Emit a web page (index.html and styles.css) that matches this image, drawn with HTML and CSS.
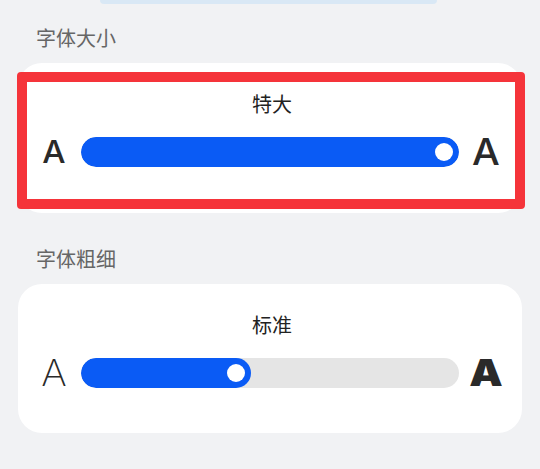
FILE: index.html
```html
<!DOCTYPE html>
<html lang="zh">
<head>
<meta charset="utf-8">
<link rel="stylesheet" href="styles.css">
</head>
<body>
<div class="topbar"></div>

<div class="section-label">字体大小</div>
<div class="card card-size">
  <div class="card-title">特大</div>
  <div class="slider-row">
    <span class="glyph glyph-small">A</span>
    <div class="track"><div class="fill" style="width:100%"><span class="knob"></span></div></div>
    <span class="glyph glyph-large">A</span>
  </div>
  <div class="highlight"></div>
</div>

<div class="section-label second">字体粗细</div>
<div class="card card-weight">
  <div class="card-title">标准</div>
  <div class="slider-row">
    <span class="glyph glyph-thin">A</span>
    <div class="track"><div class="fill" style="width:45%"><span class="knob"></span></div></div>
    <span class="glyph glyph-black">A</span>
  </div>
</div>
</body>
</html>
```

FILE: styles.css
```css
html, body {
  margin: 0;
  padding: 0;
}
body {
  background: #f1f2f4;
  width: 540px;
  height: 469px;
  overflow: hidden;
  font-family: "Noto Sans CJK SC", "Noto Sans", sans-serif;
}
.topbar {
  margin-left: 100px;
  width: 337px;
  height: 4px;
  background: #d9e8f5;
  border-radius: 0 0 10px 10px;
}
.section-label {
  margin: 24px 0 0 36px;
  font-size: 20px;
  line-height: 20px;
  height: 20px;
  color: #666666;
}
.section-label.second {
  margin-top: 36px;
}
.card {
  position: relative;
  margin: 15px 18px 0 18px;
  background: #ffffff;
  border-radius: 24px;
  height: 150px;
  box-sizing: border-box;
  padding: 31px 22px 0 24px;
}
.card-weight {
  height: 149px;
}
.card-title {
  text-align: center;
  font-size: 20px;
  line-height: 20px;
  height: 20px;
  color: #222222;
  padding-left: 2px;
}
.slider-row {
  margin-top: 23px;
  height: 30px;
  display: flex;
  align-items: center;
}
.glyph {
  font-family: Inter, Roboto, "Liberation Sans", sans-serif;
  color: #2a2a2a;
  text-align: center;
  line-height: 30px;
  height: 30px;
  display: flex;
  align-items: center;
  justify-content: center;
}
.glyph-small {
  width: 24px;
  font-size: 31px;
  font-weight: 500;
  transform: scaleX(1.06);
}
.glyph-large {
  width: 28px;
  font-size: 37px;
  font-weight: 500;
  margin-left: 13px;
  transform: scaleX(1.06);
}
.glyph-thin {
  width: 24px;
  font-size: 37px;
  font-weight: 200;
  transform: scaleX(1.05);
}
.glyph-black {
  width: 28px;
  font-size: 37px;
  font-weight: 900;
  margin-left: 13px;
  transform: scaleX(1.14);
}
.track {
  margin-left: 15px;
  width: 378px;
  height: 30px;
  border-radius: 15px;
  background: #e5e5e5;
  overflow: hidden;
}
.fill {
  position: relative;
  height: 30px;
  border-radius: 15px;
  background: #0a5bf5;
}
.knob {
  position: absolute;
  right: 6px;
  top: 6px;
  width: 18px;
  height: 18px;
  border-radius: 50%;
  background: #ffffff;
}
.highlight {
  position: absolute;
  left: -1px;
  top: 9px;
  width: 508px;
  height: 137px;
  box-sizing: border-box;
  border: 10px solid #f5343a;
  border-radius: 4px;
}
```
